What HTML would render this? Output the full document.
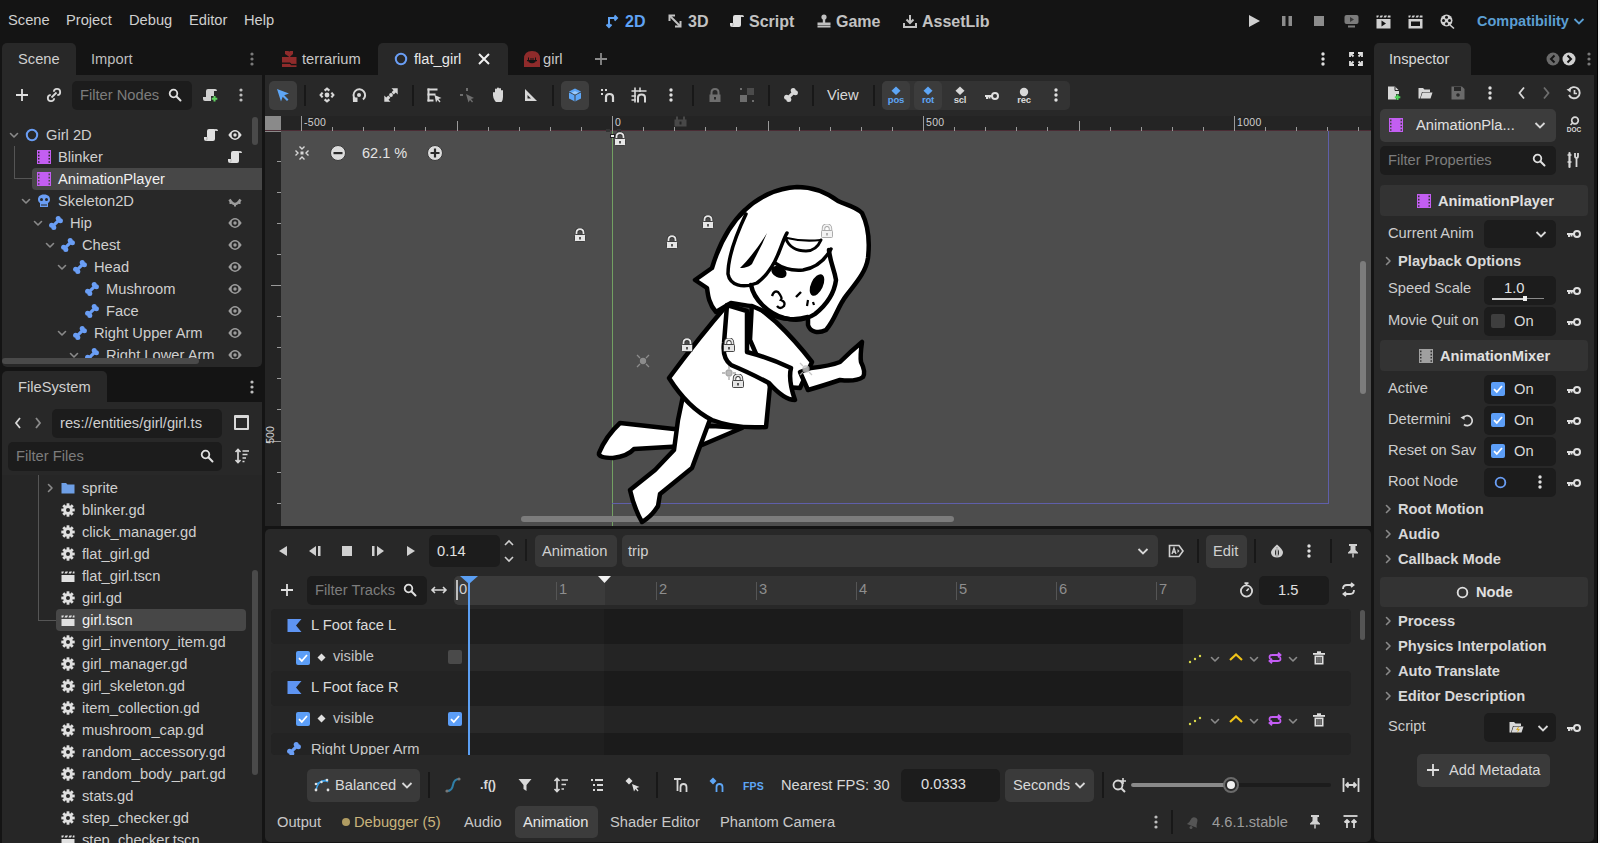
<!DOCTYPE html>
<html><head><meta charset="utf-8">
<style>
*{margin:0;padding:0;box-sizing:border-box}
html,body{width:1600px;height:843px;overflow:hidden;background:#141414}
body{position:relative;font-family:"Liberation Sans",sans-serif;font-size:14.7px;color:#cfcfcf}
.a{position:absolute}
.t{position:absolute;white-space:nowrap;line-height:20px;height:20px}
.pn{position:absolute;background:#282828}
.in{position:absolute;background:#1c1c1c;border-radius:5px}
.bt{position:absolute;background:#3c3c3c;border-radius:5px}
.dim{color:#7c7c7c}
.b{font-weight:bold}
svg{position:absolute;overflow:visible}
.sep{position:absolute;width:2px;height:24px;background:#181818}
</style></head><body>

<!-- ===== MENU BAR ===== -->
<div class="t" style="left:8px;top:10px">Scene</div>
<div class="t" style="left:66px;top:10px">Project</div>
<div class="t" style="left:129px;top:10px">Debug</div>
<div class="t" style="left:189px;top:10px">Editor</div>
<div class="t" style="left:244px;top:10px">Help</div>

<!-- ===== LEFT DOCK: SCENE ===== -->
<div class="pn" style="left:2px;top:43px;width:74px;height:40px;border-radius:5px 5px 0 0"></div>
<div class="pn" style="left:2px;top:75px;width:260px;height:292px;border-radius:0 0 5px 5px"></div>
<div class="t" style="left:18px;top:49px">Scene</div>
<div class="t" style="left:91px;top:49px;color:#bdbdbd">Import</div>
<svg class="a" style="left:245px;top:52px" width="14" height="14" viewBox="0 0 14 14"><g fill="#7a7a7a"><circle cx="7" cy="2" r="1.6"/><circle cx="7" cy="7" r="1.6"/><circle cx="7" cy="12" r="1.6"/></g></svg>
<!-- defs -->
<svg width="0" height="0" style="position:absolute">
<defs>
<symbol id="chev" viewBox="0 0 10 10"><path d="M1.5 3.5 L5 7 L8.5 3.5" fill="none" stroke="#8a8a8a" stroke-width="1.6" stroke-linecap="round" stroke-linejoin="round"/></symbol>
<symbol id="chevr" viewBox="0 0 10 10"><path d="M3.5 1.5 L7 5 L3.5 8.5" fill="none" stroke="#8a8a8a" stroke-width="1.6" stroke-linecap="round" stroke-linejoin="round"/></symbol>
<symbol id="eye" viewBox="0 0 14 14"><path d="M0.3 7 Q7 -2.8 13.7 7 Q7 16.8 0.3 7Z" fill="#e0e0e0"/><circle cx="7" cy="7" r="3.4" fill="#282828"/><circle cx="7" cy="7" r="1.7" fill="#e0e0e0"/></symbol><symbol id="eyeg" viewBox="0 0 14 14"><path d="M0.3 7 Q7 -2.8 13.7 7 Q7 16.8 0.3 7Z" fill="#9c9c9c"/><circle cx="7" cy="7" r="3.4" fill="#282828"/><circle cx="7" cy="7" r="1.7" fill="#9c9c9c"/></symbol>
<symbol id="eyec" viewBox="0 0 14 14"><path d="M1.5 1.5 Q7 10.5 12.5 1.5" fill="none" stroke="#9c9c9c" stroke-width="2.6"/><path d="M2.5 3.5 L2.5 6 M11.5 3.5 L11.5 6 M7 6 L7 8.5" stroke="#9c9c9c" stroke-width="2"/></symbol>
<symbol id="script" viewBox="0 0 14 14"><path d="M5 1 H12 Q14 1 14 3 H11 V11 Q11 13 9 13 H2 Q0 13 0 11 V9 H3 V3 Q3 1 5 1Z" fill="#e0e0e0"/><path d="M3 9 V11 Q3 12.5 1.5 12.5" fill="none" stroke="#a8a8a8" stroke-width="0.8"/><path d="M10.5 1.5 Q12 1.5 12 3" fill="none" stroke="#a8a8a8" stroke-width="0.8"/></symbol>
<symbol id="film" viewBox="0 0 14 14"><path fill-rule="evenodd" fill="#c35ef2" d="M0 0 H14 V14 H0Z M1 1.6 h1.5 v1.6 h-1.5Z M1 4.8 h1.5 v1.6 h-1.5Z M1 8 h1.5 v1.6 h-1.5Z M1 11.2 h1.5 v1.6 h-1.5Z M11.5 1.6 h1.5 v1.6 h-1.5Z M11.5 4.8 h1.5 v1.6 h-1.5Z M11.5 8 h1.5 v1.6 h-1.5Z M11.5 11.2 h1.5 v1.6 h-1.5Z"/></symbol>
<symbol id="filmg" viewBox="0 0 14 14"><path fill-rule="evenodd" fill="#a0a0a0" d="M0 0 H14 V14 H0Z M1 1.6 h1.5 v1.6 h-1.5Z M1 4.8 h1.5 v1.6 h-1.5Z M1 8 h1.5 v1.6 h-1.5Z M1 11.2 h1.5 v1.6 h-1.5Z M11.5 1.6 h1.5 v1.6 h-1.5Z M11.5 4.8 h1.5 v1.6 h-1.5Z M11.5 8 h1.5 v1.6 h-1.5Z M11.5 11.2 h1.5 v1.6 h-1.5Z"/></symbol>
<symbol id="bone" viewBox="0 0 14 14"><g fill="#6a9ef5"><path d="M3 8.8 L8.8 3 L11 5.2 L5.2 11Z"/><circle cx="9.2" cy="2.6" r="2.5"/><circle cx="11.4" cy="4.8" r="2.5"/><circle cx="2.6" cy="9.2" r="2.5"/><circle cx="4.8" cy="11.4" r="2.5"/></g></symbol>
<symbol id="ring" viewBox="0 0 14 14"><circle cx="7" cy="7" r="5.2" fill="none" stroke="#6a9ef5" stroke-width="2"/></symbol>
<symbol id="skull" viewBox="0 0 14 14"><path d="M7 0.5 C2.5 0.5 1 3 1 5.5 C1 7.5 2 8.5 3 9 V13 H11 V9 C12 8.5 13 7.5 13 5.5 C13 3 11.5 0.5 7 0.5Z" fill="#6a9ef5"/><circle cx="4.5" cy="5.5" r="1.5" fill="#282828"/><circle cx="9.5" cy="5.5" r="1.5" fill="#282828"/><path d="M5 10 v2 M7 10 v2 M9 10 v2" stroke="#282828" stroke-width="1"/></symbol>
<symbol id="gear" viewBox="0 0 14 14"><g fill="#e0e0e0"><circle cx="7" cy="7" r="4.8"/><rect x="5.6" y="0.3" width="2.8" height="13.4"/><rect x="0.3" y="5.6" width="13.4" height="2.8"/><rect x="5.6" y="0.3" width="2.8" height="13.4" transform="rotate(45 7 7)"/><rect x="5.6" y="0.3" width="2.8" height="13.4" transform="rotate(-45 7 7)"/></g><circle cx="7" cy="7" r="2" fill="#282828"/></symbol>
<symbol id="clap" viewBox="0 0 14 14"><g fill="#e0e0e0"><rect x="0.5" y="6" width="13" height="7"/><path d="M0.5 2.5 L3 2.5 L2 4.5 H0.5Z M4.5 2.5 H7 L6 4.5 H3.5Z M8.5 2.5 H11 L10 4.5 H7.5Z M12 2.5 H13.5 V4.5 H11.5Z"/></g></symbol>
<symbol id="folder" viewBox="0 0 14 14"><path d="M0.5 2 H5 L6.5 3.5 H13.5 V12.5 H0.5Z" fill="#6e9fe6"/></symbol>
<symbol id="kebab" viewBox="0 0 14 14"><g fill="#bdbdbd"><circle cx="7" cy="2" r="1.6"/><circle cx="7" cy="7" r="1.6"/><circle cx="7" cy="12" r="1.6"/></g></symbol>
<symbol id="kebabw" viewBox="0 0 14 14"><g fill="#e0e0e0"><circle cx="7" cy="2" r="1.7"/><circle cx="7" cy="7" r="1.7"/><circle cx="7" cy="12" r="1.7"/></g></symbol>
<symbol id="search" viewBox="0 0 14 14"><circle cx="5.5" cy="5.5" r="3.8" fill="none" stroke="#e0e0e0" stroke-width="1.8"/><path d="M8.3 8.3 L12.5 12.5" stroke="#e0e0e0" stroke-width="2" stroke-linecap="round"/></symbol>
<symbol id="plus" viewBox="0 0 14 14"><path d="M7 1 V13 M1 7 H13" stroke="#e0e0e0" stroke-width="1.8"/></symbol>
<symbol id="lock" viewBox="0 0 14 14"><path d="M3.5 7 V4.8 Q3.5 1.2 7 1.2 Q10.5 1.2 10.5 4.8 V7" fill="none" stroke="#333" stroke-width="3.4"/><path d="M3.5 7 V4.8 Q3.5 1.2 7 1.2 Q10.5 1.2 10.5 4.8 V7" fill="none" stroke="#e6e6e6" stroke-width="1.8"/><rect x="1.5" y="6.5" width="11" height="7" rx="1" fill="#e6e6e6" stroke="#333" stroke-width="0.9"/><rect x="6.2" y="9" width="1.6" height="2.5" fill="#333"/></symbol>
<symbol id="key" viewBox="0 0 16 10"><circle cx="11" cy="5" r="3" fill="none" stroke="#e0e0e0" stroke-width="2"/><path d="M1 5 H8 M3 5 V8 M5.5 5 V7.5" stroke="#e0e0e0" stroke-width="2"/></symbol>
<symbol id="chk" viewBox="0 0 14 14"><rect x="0" y="0" width="14" height="14" rx="2" fill="#5c9ef7"/><path d="M3 7.2 L5.8 10 L11 4" fill="none" stroke="#fff" stroke-width="1.8"/></symbol>
<symbol id="boneg" viewBox="0 0 14 14"><g fill="#d8d8d8"><path d="M3 8.8 L8.8 3 L11 5.2 L5.2 11Z"/><circle cx="9.2" cy="2.6" r="2.5"/><circle cx="11.4" cy="4.8" r="2.5"/><circle cx="2.6" cy="9.2" r="2.5"/><circle cx="4.8" cy="11.4" r="2.5"/></g></symbol>
<symbol id="chevw" viewBox="0 0 12 12"><path d="M1.5 4 L6 8.5 L10.5 4" fill="none" stroke="#d8d8d8" stroke-width="1.8"/></symbol>
</defs></svg>

<!-- Scene toolbar -->
<svg class="a" style="left:15px;top:88px" width="14" height="14"><use href="#plus"/></svg>
<svg class="a" style="left:47px;top:88px" width="14" height="14" viewBox="0 0 14 14"><g fill="none" stroke="#d8d8d8" stroke-width="1.8"><path d="M7.19 10.28 A3.2 3.2 0 1 1 3.72 6.81"/><path d="M6.81 3.72 A3.2 3.2 0 1 1 10.28 7.19"/><path d="M4.5 9.5 L9.5 4.5"/></g></svg>
<div class="in" style="left:72px;top:81px;width:120px;height:29px"></div>
<div class="t dim" style="left:80px;top:85px">Filter Nodes</div>
<svg class="a" style="left:168px;top:88px" width="14" height="14"><use href="#search"/></svg>
<svg class="a" style="left:203px;top:88px" width="14" height="14" viewBox="0 0 14 14"><path d="M5 1 H12 Q14 1 14 3 H11 V8 H8 V13 H2 Q0 13 0 11 V9 H3 V3 Q3 1 5 1Z" fill="#d0d0d0"/><path d="M11.5 8 V13.5 M8.7 10.8 H14.3" stroke="#5fd35f" stroke-width="2"/></svg>
<svg class="a" style="left:234px;top:88px" width="14" height="14"><use href="#kebab"/></svg>

<!-- Scene tree -->
<div class="a" style="left:32px;top:168px;width:230px;height:22px;background:#474747;border-radius:4px 0 0 4px"></div>
<div class="a" style="left:14px;top:146px;width:1px;height:33px;background:#555"></div>
<div class="a" style="left:14px;top:178px;width:18px;height:1px;background:#555"></div>
<div class="a" style="left:252px;top:117px;width:6px;height:28px;background:#4a4a4a;border-radius:3px"></div>

<svg class="a" style="left:9px;top:130px" width="10" height="10"><use href="#chev"/></svg>
<svg class="a" style="left:25px;top:128px" width="14" height="14"><use href="#ring"/></svg>
<div class="t" style="left:46px;top:125px">Girl 2D</div>
<svg class="a" style="left:204px;top:128px" width="14" height="14"><use href="#script"/></svg>
<svg class="a" style="left:228px;top:128px" width="14" height="14"><use href="#eye"/></svg>

<svg class="a" style="left:37px;top:150px" width="14" height="14"><use href="#film"/></svg>
<div class="t" style="left:58px;top:147px">Blinker</div>
<svg class="a" style="left:228px;top:150px" width="14" height="14"><use href="#script"/></svg>

<svg class="a" style="left:37px;top:172px" width="14" height="14"><use href="#film"/></svg>
<div class="t" style="left:58px;top:169px;color:#f0f0f0">AnimationPlayer</div>

<svg class="a" style="left:21px;top:196px" width="10" height="10"><use href="#chev"/></svg>
<svg class="a" style="left:37px;top:194px" width="14" height="14"><use href="#skull"/></svg>
<div class="t" style="left:58px;top:191px">Skeleton2D</div>
<svg class="a" style="left:228px;top:198px" width="14" height="14"><use href="#eyec"/></svg>

<svg class="a" style="left:33px;top:218px" width="10" height="10"><use href="#chev"/></svg>
<svg class="a" style="left:49px;top:216px" width="14" height="14"><use href="#bone"/></svg>
<div class="t" style="left:70px;top:213px">Hip</div>
<svg class="a" style="left:228px;top:216px" width="14" height="14"><use href="#eyeg"/></svg>

<svg class="a" style="left:45px;top:240px" width="10" height="10"><use href="#chev"/></svg>
<svg class="a" style="left:61px;top:238px" width="14" height="14"><use href="#bone"/></svg>
<div class="t" style="left:82px;top:235px">Chest</div>
<svg class="a" style="left:228px;top:238px" width="14" height="14"><use href="#eyeg"/></svg>

<svg class="a" style="left:57px;top:262px" width="10" height="10"><use href="#chev"/></svg>
<svg class="a" style="left:73px;top:260px" width="14" height="14"><use href="#bone"/></svg>
<div class="t" style="left:94px;top:257px">Head</div>
<svg class="a" style="left:228px;top:260px" width="14" height="14"><use href="#eyeg"/></svg>

<svg class="a" style="left:85px;top:282px" width="14" height="14"><use href="#bone"/></svg>
<div class="t" style="left:106px;top:279px">Mushroom</div>
<svg class="a" style="left:228px;top:282px" width="14" height="14"><use href="#eyeg"/></svg>

<svg class="a" style="left:85px;top:304px" width="14" height="14"><use href="#bone"/></svg>
<div class="t" style="left:106px;top:301px">Face</div>
<svg class="a" style="left:228px;top:304px" width="14" height="14"><use href="#eyeg"/></svg>

<svg class="a" style="left:57px;top:328px" width="10" height="10"><use href="#chev"/></svg>
<svg class="a" style="left:73px;top:326px" width="14" height="14"><use href="#bone"/></svg>
<div class="t" style="left:94px;top:323px">Right Upper Arm</div>
<svg class="a" style="left:228px;top:326px" width="14" height="14"><use href="#eyeg"/></svg>

<div class="a" style="left:2px;top:345px;width:260px;height:14px;overflow:hidden">
<svg class="a" style="left:67px;top:5px" width="10" height="10"><use href="#chev"/></svg>
<svg class="a" style="left:83px;top:3px" width="14" height="14"><use href="#bone"/></svg>
<div class="t" style="left:104px;top:0px">Right Lower Arm</div>
<svg class="a" style="left:226px;top:3px" width="14" height="14"><use href="#eyeg"/></svg>
</div>
<div class="a" style="left:2px;top:358px;width:197px;height:6px;background:#4a4a4a;border-radius:3px"></div>

<!-- ===== FILESYSTEM DOCK ===== -->
<div class="pn" style="left:2px;top:371px;width:105px;height:40px;border-radius:5px 5px 0 0"></div>
<div class="pn" style="left:2px;top:402px;width:260px;height:441px"></div>
<div class="t" style="left:18px;top:377px">FileSystem</div>
<svg class="a" style="left:245px;top:380px" width="14" height="14"><use href="#kebab"/></svg>
<svg class="a" style="left:12px;top:416px" width="12" height="14" viewBox="0 0 12 14"><path d="M8 2 L4 7 L8 12" fill="none" stroke="#d8d8d8" stroke-width="1.8"/></svg>
<svg class="a" style="left:32px;top:416px" width="12" height="14" viewBox="0 0 12 14"><path d="M4 2 L8 7 L4 12" fill="none" stroke="#8a8a8a" stroke-width="1.8"/></svg>
<div class="in" style="left:52px;top:409px;width:170px;height:29px"></div>
<div class="t" style="left:60px;top:413px">res://entities/girl/girl.ts</div>
<div class="a" style="left:234px;top:415px;width:15px;height:15px;border:2px solid #d8d8d8;border-top-width:3px;border-radius:1px"></div>
<div class="in" style="left:8px;top:442px;width:214px;height:29px"></div>
<div class="t dim" style="left:16px;top:446px">Filter Files</div>
<svg class="a" style="left:200px;top:449px" width="14" height="14"><use href="#search"/></svg>
<svg class="a" style="left:234px;top:448px" width="16" height="16" viewBox="0 0 16 16"><path d="M4 1.5 V14.5 M1.5 4 L4 1.5 L6.5 4 M1.5 12 L4 14.5 L6.5 12" fill="none" stroke="#d8d8d8" stroke-width="1.7"/><path d="M8.5 3 H15 M8.5 6.5 H13.5 M8.5 10 H12 M8.5 13.5 H10.5" stroke="#d8d8d8" stroke-width="1.7"/></svg>

<div class="a" style="left:2px;top:475px;width:260px;height:368px;background:#262626"></div>
<div class="a" style="left:38px;top:475px;width:1px;height:146px;background:#555"></div>
<div class="a" style="left:38px;top:620px;width:18px;height:1px;background:#555"></div>
<div class="a" style="left:56px;top:609px;width:190px;height:22px;background:#474747;border-radius:4px"></div>
<div class="a" style="left:252px;top:570px;width:6px;height:205px;background:#4a4a4a;border-radius:3px"></div>

<svg class="a" style="left:45px;top:483px" width="10" height="10"><use href="#chevr"/></svg>
<svg class="a" style="left:61px;top:481px" width="14" height="14"><use href="#folder"/></svg>
<div class="t" style="left:82px;top:478px">sprite</div>
<svg class="a" style="left:61px;top:503px" width="14" height="14"><use href="#gear"/></svg>
<div class="t" style="left:82px;top:500px;">blinker.gd</div>
<svg class="a" style="left:61px;top:525px" width="14" height="14"><use href="#gear"/></svg>
<div class="t" style="left:82px;top:522px;">click_manager.gd</div>
<svg class="a" style="left:61px;top:547px" width="14" height="14"><use href="#gear"/></svg>
<div class="t" style="left:82px;top:544px;">flat_girl.gd</div>
<svg class="a" style="left:61px;top:569px" width="14" height="14"><use href="#clap"/></svg>
<div class="t" style="left:82px;top:566px;">flat_girl.tscn</div>
<svg class="a" style="left:61px;top:591px" width="14" height="14"><use href="#gear"/></svg>
<div class="t" style="left:82px;top:588px;">girl.gd</div>
<svg class="a" style="left:61px;top:613px" width="14" height="14"><use href="#clap"/></svg>
<div class="t" style="left:82px;top:610px;color:#f0f0f0;">girl.tscn</div>
<svg class="a" style="left:61px;top:635px" width="14" height="14"><use href="#gear"/></svg>
<div class="t" style="left:82px;top:632px;">girl_inventory_item.gd</div>
<svg class="a" style="left:61px;top:657px" width="14" height="14"><use href="#gear"/></svg>
<div class="t" style="left:82px;top:654px;">girl_manager.gd</div>
<svg class="a" style="left:61px;top:679px" width="14" height="14"><use href="#gear"/></svg>
<div class="t" style="left:82px;top:676px;">girl_skeleton.gd</div>
<svg class="a" style="left:61px;top:701px" width="14" height="14"><use href="#gear"/></svg>
<div class="t" style="left:82px;top:698px;">item_collection.gd</div>
<svg class="a" style="left:61px;top:723px" width="14" height="14"><use href="#gear"/></svg>
<div class="t" style="left:82px;top:720px;">mushroom_cap.gd</div>
<svg class="a" style="left:61px;top:745px" width="14" height="14"><use href="#gear"/></svg>
<div class="t" style="left:82px;top:742px;">random_accessory.gd</div>
<svg class="a" style="left:61px;top:767px" width="14" height="14"><use href="#gear"/></svg>
<div class="t" style="left:82px;top:764px;">random_body_part.gd</div>
<svg class="a" style="left:61px;top:789px" width="14" height="14"><use href="#gear"/></svg>
<div class="t" style="left:82px;top:786px;">stats.gd</div>
<svg class="a" style="left:61px;top:811px" width="14" height="14"><use href="#gear"/></svg>
<div class="t" style="left:82px;top:808px;">step_checker.gd</div>
<svg class="a" style="left:61px;top:833px" width="14" height="14"><use href="#clap"/></svg>
<div class="t" style="left:82px;top:830px;">step_checker.tscn</div>
<!-- ===== TOP CENTER MENU ===== -->
<svg class="a" style="left:606px;top:14px" width="14" height="14" viewBox="0 0 14 14"><g fill="none" stroke="#5fa3f5" stroke-width="2"><path d="M3 13 V4 H11"/><path d="M0.5 10.5 L3 13 L5.5 10.5"/><path d="M8.5 1.5 L11 4 L8.5 6.5"/></g></svg>
<div class="t b" style="left:625px;top:12px;font-size:16px;color:#5fa3f5">2D</div>
<svg class="a" style="left:668px;top:14px" width="14" height="14" viewBox="0 0 14 14"><g fill="none" stroke="#c2c2c2" stroke-width="2"><path d="M1.5 7 V1.5 H7"/><path d="M12.5 7 V12.5 H7"/><path d="M2 2 L12 12"/></g></svg>
<div class="t b" style="left:688px;top:12px;font-size:16px;color:#c2c2c2">3D</div>
<svg class="a" style="left:730px;top:14px" width="14" height="14"><use href="#script"/></svg>
<div class="t b" style="left:749px;top:12px;font-size:16px;color:#c2c2c2">Script</div>
<svg class="a" style="left:817px;top:14px" width="14" height="14" viewBox="0 0 14 14"><g fill="#c2c2c2"><circle cx="7" cy="3" r="2.6"/><rect x="5.8" y="4" width="2.4" height="5"/><rect x="0.5" y="8.5" width="13" height="2.5"/><rect x="0.5" y="11.5" width="13" height="2"/></g></svg>
<div class="t b" style="left:836px;top:12px;font-size:16px;color:#c2c2c2">Game</div>
<svg class="a" style="left:903px;top:14px" width="14" height="14" viewBox="0 0 14 14"><g fill="none" stroke="#c2c2c2" stroke-width="2"><path d="M7 1 V9"/><path d="M3.5 5.5 L7 9 L10.5 5.5"/><path d="M1 9 V13 H13 V9"/></g></svg>
<div class="t b" style="left:922px;top:12px;font-size:16px;color:#c2c2c2">AssetLib</div>

<!-- ===== TOP RIGHT PLAY BUTTONS ===== -->
<svg class="a" style="left:1247px;top:14px" width="14" height="14" viewBox="0 0 14 14"><path d="M2 1 L13 7 L2 13Z" fill="#d0d0d0"/></svg>
<svg class="a" style="left:1280px;top:14px" width="14" height="14" viewBox="0 0 14 14"><rect x="2" y="2" width="3.5" height="10" fill="#8c8c8c"/><rect x="8.5" y="2" width="3.5" height="10" fill="#8c8c8c"/></svg>
<svg class="a" style="left:1312px;top:14px" width="14" height="14" viewBox="0 0 14 14"><rect x="2" y="2" width="10" height="10" fill="#8c8c8c"/></svg>
<svg class="a" style="left:1344px;top:14px" width="15" height="14" viewBox="0 0 15 14"><rect x="0.5" y="1" width="14" height="9" rx="2" fill="#7c7c7c"/><path d="M6 3 L10 5.5 L6 8Z" fill="#3a3a3a"/><rect x="4" y="11.5" width="7" height="2" fill="#7c7c7c"/></svg>
<svg class="a" style="left:1376px;top:14px" width="15" height="15" viewBox="0 0 15 15"><g fill="#d0d0d0"><rect x="0.5" y="5" width="14" height="9.5"/><path d="M0.5 1.5 H3 L2 3.5 H0.5Z M4.5 1.5 H7 L6 3.5 H3.5Z M8.5 1.5 H11 L10 3.5 H7.5Z M12 1.5 H14.5 V3.5 H11.5Z"/></g><path d="M5.5 6.5 L10 9.5 L5.5 12.5Z" fill="#141414"/></svg>
<svg class="a" style="left:1408px;top:14px" width="15" height="15" viewBox="0 0 15 15"><g fill="#d0d0d0"><rect x="0.5" y="5" width="14" height="9.5"/><path d="M0.5 1.5 H3 L2 3.5 H0.5Z M4.5 1.5 H7 L6 3.5 H3.5Z M8.5 1.5 H11 L10 3.5 H7.5Z M12 1.5 H14.5 V3.5 H11.5Z"/></g><rect x="3" y="7.5" width="9" height="4.5" fill="#141414"/></svg>
<svg class="a" style="left:1440px;top:14px" width="15" height="15" viewBox="0 0 15 15"><circle cx="6.5" cy="6.5" r="6" fill="#d0d0d0"/><g fill="#141414"><circle cx="6.5" cy="3.3" r="1.5"/><circle cx="3.5" cy="6.5" r="1.5"/><circle cx="9.5" cy="6.5" r="1.5"/><circle cx="6.5" cy="9.7" r="1.5"/></g><path d="M10 11 L14 14.5" stroke="#d0d0d0" stroke-width="1.6"/></svg>
<div class="t b" style="left:1477px;top:11px;font-size:14.5px;color:#5b9ed2">Compatibility</div>
<svg class="a" style="left:1573px;top:15px" width="12" height="12" viewBox="0 0 12 12"><path d="M1.5 4 L6 8.5 L10.5 4" fill="none" stroke="#5b9ed2" stroke-width="1.8"/></svg>

<!-- ===== SCENE TABS ===== -->
<svg class="a" style="left:282px;top:51px" width="15" height="16" viewBox="0 0 15 16"><g fill="#8f2b2b"><path d="M3 0 H6.5 L7.2 0.8 L8 0 H11 V3 L8.2 5.5 V6 H6.8 V5.5 L3 3Z"/><path d="M0 6 H14.5 V13.5 H9.5 L8.5 12 H0Z"/><path d="M0 12.8 H8 L9 14.3 H14.5 V16 H0Z" /></g><path d="M0 12 H8.2 L9.2 13.4 H14.5" fill="none" stroke="#141414" stroke-width="1"/></svg>
<div class="t" style="left:302px;top:49px;color:#c8c8c8">terrarium</div>
<div class="pn" style="left:378px;top:43px;width:130px;height:40px;border-radius:5px 5px 0 0"></div>
<svg class="a" style="left:394px;top:52px" width="14" height="14"><use href="#ring"/></svg>
<div class="t" style="left:414px;top:49px;color:#e8e8e8">flat_girl</div>
<svg class="a" style="left:477px;top:52px" width="14" height="14" viewBox="0 0 14 14"><path d="M2 2 L12 12 M12 2 L2 12" stroke="#f0f0f0" stroke-width="2"/></svg>
<svg class="a" style="left:524px;top:51px" width="16" height="16" viewBox="0 0 16 16"><path d="M0 16 V8 Q0 0 8 0 Q16 0 16 8 V16Z" fill="#8f2b2b"/><g fill="#141414"><rect x="4" y="6.5" width="1" height="3"/><rect x="11" y="6.5" width="1" height="3"/><rect x="3" y="9" width="10" height="1.2"/><rect x="6" y="7.5" width="4" height="1"/><path d="M4.5 10 H11.5 V11 Q8 13.5 4.5 11Z"/></g></svg>
<div class="t" style="left:543px;top:49px;color:#c8c8c8">girl</div>
<svg class="a" style="left:594px;top:52px" width="14" height="14" viewBox="0 0 14 14"><path d="M7 1 V13 M1 7 H13" stroke="#8a8a8a" stroke-width="1.8"/></svg>
<svg class="a" style="left:1316px;top:52px" width="14" height="14"><use href="#kebabw"/></svg>
<svg class="a" style="left:1349px;top:52px" width="14" height="14" viewBox="0 0 14 14"><g fill="none" stroke="#e0e0e0" stroke-width="1.8"><path d="M1 5 V1 H5 M9 1 H13 V5 M13 9 V13 H9 M5 13 H1 V9"/><path d="M1.5 1.5 L4.5 4.5 M12.5 1.5 L9.5 4.5 M12.5 12.5 L9.5 9.5 M1.5 12.5 L4.5 9.5"/></g></svg>

<!-- ===== CANVAS PANEL ===== -->
<div class="pn" style="left:265px;top:75px;width:1106px;height:451px"></div>
<!-- toolbar -->
<div class="bt" style="left:269px;top:81px;width:28px;height:29px;background:#3e3e3e"></div>
<svg class="a" style="left:276px;top:88px" width="14" height="14" viewBox="0 0 14 14"><path d="M1 1 L13 5.5 L8.2 7.2 L12.5 11.5 L11 13 L6.7 8.7 L5 13.5Z" fill="#5ea6f6"/></svg>
<div class="sep" style="left:304px;top:85px;height:21px"></div>
<svg class="a" style="left:320px;top:88px" width="14" height="14" viewBox="0 0 14 14"><circle cx="7" cy="7" r="2.4" fill="#d8d8d8"/><g fill="none" stroke="#d8d8d8" stroke-width="2.1" stroke-linejoin="miter"><path d="M4.6 2.6 L7 0.6 L9.4 2.6"/><path d="M4.6 11.4 L7 13.4 L9.4 11.4"/><path d="M2.6 4.6 L0.6 7 L2.6 9.4"/><path d="M11.4 4.6 L13.4 7 L11.4 9.4"/></g></svg>
<svg class="a" style="left:352px;top:88px" width="14" height="14" viewBox="0 0 14 14"><path d="M3.2 11.2 A5.8 5.8 0 1 1 11 11.6" fill="none" stroke="#d8d8d8" stroke-width="2"/><circle cx="7" cy="7" r="2" fill="#d8d8d8"/><path d="M0.8 9.5 L5.5 9.5 L5.5 14 L1 14Z" fill="#d8d8d8"/></svg>
<svg class="a" style="left:384px;top:88px" width="14" height="14" viewBox="0 0 14 14"><circle cx="7" cy="7" r="1.9" fill="#d8d8d8"/><path d="M7.5 0.3 H13.7 V6.5 L11.7 4.5 L9.8 6.4 L7.6 4.2 L9.5 2.3Z" fill="#d8d8d8"/><path d="M6.5 13.7 H0.3 V7.5 L2.3 9.5 L4.2 7.6 L6.4 9.8 L4.5 11.7Z" fill="#d8d8d8"/></svg>
<div class="sep" style="left:412px;top:85px;height:21px"></div>
<svg class="a" style="left:427px;top:88px" width="15" height="15" viewBox="0 0 15 15"><g fill="#d8d8d8"><rect x="0.5" y="0.5" width="10" height="2"/><rect x="0.5" y="0.5" width="2" height="13"/><rect x="0.5" y="5.5" width="8" height="2"/><rect x="0.5" y="11.5" width="6" height="2"/><path d="M7.5 7 L14.5 10 L11.5 11 L13.5 13.5 L12.5 14.5 L10.5 12 L9 14.5Z"/></g></svg>
<svg class="a" style="left:460px;top:88px" width="15" height="15" viewBox="0 0 15 15"><g fill="#6e6e6e"><rect x="6" y="0" width="2" height="3"/><rect x="0" y="6" width="3" height="2"/><path d="M6 6 L14 10 L11 11 L13 13.5 L12 14.5 L10 12 L8.5 14.5Z"/></g></svg>
<svg class="a" style="left:492px;top:87px" width="14" height="16" viewBox="0 0 14 16"><path d="M3 14 Q1 11 1 8.5 V6 Q1 5 2 5 Q3 5 3 6 V8 V2.5 Q3 1.5 4 1.5 Q5 1.5 5 2.5 V7 V1.5 Q5 0.5 6 0.5 Q7 0.5 7 1.5 V7 V2 Q7 1 8 1 Q9 1 9 2 V7 V4 Q9 3 10 3 Q11 3 11 4 V10 Q11 13 9.5 15 H4Z" fill="#d8d8d8"/></svg>
<svg class="a" style="left:524px;top:88px" width="14" height="14" viewBox="0 0 14 14"><path d="M1 1 V13 H13Z" fill="#d8d8d8"/><path d="M3.5 7 V10.5 H7Z" fill="#282828"/></svg>
<div class="sep" style="left:552px;top:85px;height:21px"></div>
<div class="bt" style="left:561px;top:81px;width:28px;height:29px;background:#3e3e3e"></div>
<svg class="a" style="left:568px;top:88px" width="14" height="14" viewBox="0 0 14 14"><path d="M7 0.5 L13 3.5 V10.5 L7 13.5 L1 10.5 V3.5Z" fill="#5ea6f6"/><path d="M7 7 L13 4 M7 7 L1 4 M7 7 V13.5" stroke="#3e3e3e" stroke-width="1"/><path d="M7 3 L10.5 4.8 L7 6.5 L3.5 4.8Z" fill="#9ccaf9"/></svg>
<svg class="a" style="left:600px;top:88px" width="15" height="15" viewBox="0 0 15 15"><g fill="#d8d8d8"><rect x="1" y="1" width="2" height="2"/><rect x="1" y="5" width="2" height="2"/><rect x="5" y="1" width="2" height="2"/></g><path d="M6 14 V9 Q6 6 9.5 6 Q13 6 13 9 V14" fill="none" stroke="#d8d8d8" stroke-width="2.2"/></svg>
<svg class="a" style="left:631px;top:87px" width="16" height="16" viewBox="0 0 16 16"><g stroke="#d8d8d8" stroke-width="1.6" fill="none"><path d="M4 0.5 V15.5 M9 0.5 V5 M0.5 4 H15.5 M0.5 9 H5 M0.5 13 H5"/><path d="M7 15.5 V10.5 Q7 7.5 10.5 7.5 Q14 7.5 14 10.5 V15.5" stroke-width="2"/></g></svg>
<svg class="a" style="left:664px;top:88px" width="14" height="14"><use href="#kebabw"/></svg>
<div class="sep" style="left:692px;top:85px;height:21px"></div>
<svg class="a" style="left:708px;top:88px" width="14" height="14" viewBox="0 0 14 14"><path d="M3.5 7 V4.5 Q3.5 1 7 1 Q10.5 1 10.5 4.5 V7" fill="none" stroke="#6e6e6e" stroke-width="2"/><rect x="1.5" y="6.5" width="11" height="7.5" fill="#6e6e6e"/><rect x="6" y="9" width="2" height="2.5" fill="#282828"/></svg>
<svg class="a" style="left:740px;top:88px" width="14" height="14" viewBox="0 0 14 14"><g fill="#6e6e6e"><rect x="0" y="7" width="7" height="7"/><rect x="7" y="0" width="7" height="7" opacity="0.5"/><rect x="0" y="0" width="2" height="2"/><rect x="12" y="12" width="2" height="2"/></g></svg>
<div class="sep" style="left:768px;top:85px;height:21px"></div>
<svg class="a" style="left:784px;top:88px" width="14" height="14"><use href="#boneg"/></svg>
<div class="sep" style="left:812px;top:85px;height:21px"></div>
<div class="t" style="left:827px;top:85px;color:#d8d8d8">View</div>
<div class="sep" style="left:873px;top:85px;height:21px"></div>
<div class="a" style="left:882px;top:81px;width:188px;height:29px;background:#333;border-radius:5px"></div>
<div class="a" style="left:882px;top:81px;width:28px;height:29px;background:#3c3c3c;border-radius:5px"></div>
<div class="a" style="left:914px;top:81px;width:28px;height:29px;background:#3c3c3c;border-radius:5px"></div>
<svg class="a" style="left:886px;top:87px" width="20" height="18" viewBox="0 0 20 18"><path d="M10 -0.5 L14.5 3.8 L10 8 L5.5 3.8Z" fill="#5ea6f6"/><text x="10" y="16" text-anchor="middle" font-family="Liberation Sans" font-weight="bold" font-size="9.5" letter-spacing="-0.2" fill="#5ea6f6">pos</text></svg>
<svg class="a" style="left:918px;top:87px" width="20" height="18" viewBox="0 0 20 18"><path d="M10 -0.5 L14.5 3.8 L10 8 L5.5 3.8Z" fill="#5ea6f6"/><text x="10" y="16" text-anchor="middle" font-family="Liberation Sans" font-weight="bold" font-size="9.5" letter-spacing="-0.2" fill="#5ea6f6">rot</text></svg>
<svg class="a" style="left:950px;top:87px" width="20" height="18" viewBox="0 0 20 18"><path d="M10 -0.5 L14.5 3.8 L10 8 L5.5 3.8Z" fill="#d8d8d8"/><text x="10" y="16" text-anchor="middle" font-family="Liberation Sans" font-weight="bold" font-size="9.5" letter-spacing="-0.2" fill="#d8d8d8">scl</text></svg>
<svg class="a" style="left:984px;top:91px" width="16" height="10"><use href="#key"/></svg>
<svg class="a" style="left:1014px;top:87px" width="20" height="18" viewBox="0 0 20 18"><circle cx="10" cy="5" r="4.2" fill="#d8d8d8"/><text x="10" y="16" text-anchor="middle" font-family="Liberation Sans" font-weight="bold" font-size="9.5" letter-spacing="-0.2" fill="#d8d8d8">rec</text></svg>
<svg class="a" style="left:1049px;top:88px" width="14" height="14"><use href="#kebabw"/></svg>
<!-- rulers & viewport -->
<div class="a" style="left:265px;top:116px;width:1106px;height:16px;background:#242424"></div>
<div class="a" style="left:265px;top:131px;width:16px;height:395px;background:#242424"></div>
<div class="a" style="left:265px;top:116px;width:16px;height:16px;background:#8a8a8a"></div>
<div class="a" style="left:281px;top:131px;width:1090px;height:395px;background:#4d4d4d"></div>
<div class="a" style="left:265px;top:130px;width:1106px;height:1px;background:#4b2c35"></div>
<div class="a" style="left:301.0px;top:116px;width:1px;height:15px;background:#9a9a9a"></div>
<div class="a" style="left:332.1px;top:127px;width:1px;height:4px;background:#9a9a9a"></div>
<div class="a" style="left:363.2px;top:127px;width:1px;height:4px;background:#9a9a9a"></div>
<div class="a" style="left:394.3px;top:127px;width:1px;height:4px;background:#9a9a9a"></div>
<div class="a" style="left:425.4px;top:127px;width:1px;height:4px;background:#9a9a9a"></div>
<div class="a" style="left:456.5px;top:121px;width:1px;height:10px;background:#9a9a9a"></div>
<div class="a" style="left:487.6px;top:127px;width:1px;height:4px;background:#9a9a9a"></div>
<div class="a" style="left:518.7px;top:127px;width:1px;height:4px;background:#9a9a9a"></div>
<div class="a" style="left:549.8px;top:127px;width:1px;height:4px;background:#9a9a9a"></div>
<div class="a" style="left:580.9px;top:127px;width:1px;height:4px;background:#9a9a9a"></div>
<div class="a" style="left:612.0px;top:116px;width:1px;height:15px;background:#9a9a9a"></div>
<div class="a" style="left:643.1px;top:127px;width:1px;height:4px;background:#9a9a9a"></div>
<div class="a" style="left:674.2px;top:127px;width:1px;height:4px;background:#9a9a9a"></div>
<div class="a" style="left:705.3px;top:127px;width:1px;height:4px;background:#9a9a9a"></div>
<div class="a" style="left:736.4px;top:127px;width:1px;height:4px;background:#9a9a9a"></div>
<div class="a" style="left:767.5px;top:121px;width:1px;height:10px;background:#9a9a9a"></div>
<div class="a" style="left:798.6px;top:127px;width:1px;height:4px;background:#9a9a9a"></div>
<div class="a" style="left:829.7px;top:127px;width:1px;height:4px;background:#9a9a9a"></div>
<div class="a" style="left:860.8px;top:127px;width:1px;height:4px;background:#9a9a9a"></div>
<div class="a" style="left:891.9px;top:127px;width:1px;height:4px;background:#9a9a9a"></div>
<div class="a" style="left:923.0px;top:116px;width:1px;height:15px;background:#9a9a9a"></div>
<div class="a" style="left:954.1px;top:127px;width:1px;height:4px;background:#9a9a9a"></div>
<div class="a" style="left:985.2px;top:127px;width:1px;height:4px;background:#9a9a9a"></div>
<div class="a" style="left:1016.3px;top:127px;width:1px;height:4px;background:#9a9a9a"></div>
<div class="a" style="left:1047.4px;top:127px;width:1px;height:4px;background:#9a9a9a"></div>
<div class="a" style="left:1078.5px;top:121px;width:1px;height:10px;background:#9a9a9a"></div>
<div class="a" style="left:1109.6px;top:127px;width:1px;height:4px;background:#9a9a9a"></div>
<div class="a" style="left:1140.7px;top:127px;width:1px;height:4px;background:#9a9a9a"></div>
<div class="a" style="left:1171.8px;top:127px;width:1px;height:4px;background:#9a9a9a"></div>
<div class="a" style="left:1202.9px;top:127px;width:1px;height:4px;background:#9a9a9a"></div>
<div class="a" style="left:1234.0px;top:116px;width:1px;height:15px;background:#9a9a9a"></div>
<div class="a" style="left:1265.1px;top:127px;width:1px;height:4px;background:#9a9a9a"></div>
<div class="a" style="left:1296.2px;top:127px;width:1px;height:4px;background:#9a9a9a"></div>
<div class="a" style="left:1327.3px;top:127px;width:1px;height:4px;background:#9a9a9a"></div>
<div class="a" style="left:1358.4px;top:127px;width:1px;height:4px;background:#9a9a9a"></div>
<div class="t" style="left:304.0px;top:112px;font-size:10.5px;color:#cfcfcf;letter-spacing:0.3px">-500</div>
<div class="t" style="left:615.0px;top:112px;font-size:10.5px;color:#cfcfcf;letter-spacing:0.3px">0</div>
<div class="t" style="left:926.0px;top:112px;font-size:10.5px;color:#cfcfcf;letter-spacing:0.3px">500</div>
<div class="t" style="left:1237.0px;top:112px;font-size:10.5px;color:#cfcfcf;letter-spacing:0.3px">1000</div>
<div class="a" style="left:277px;top:160.6px;width:4px;height:1px;background:#9a9a9a"></div>
<div class="a" style="left:277px;top:191.7px;width:4px;height:1px;background:#9a9a9a"></div>
<div class="a" style="left:277px;top:222.8px;width:4px;height:1px;background:#9a9a9a"></div>
<div class="a" style="left:277px;top:253.9px;width:4px;height:1px;background:#9a9a9a"></div>
<div class="a" style="left:271px;top:285.0px;width:10px;height:1px;background:#9a9a9a"></div>
<div class="a" style="left:277px;top:316.1px;width:4px;height:1px;background:#9a9a9a"></div>
<div class="a" style="left:277px;top:347.2px;width:4px;height:1px;background:#9a9a9a"></div>
<div class="a" style="left:277px;top:378.3px;width:4px;height:1px;background:#9a9a9a"></div>
<div class="a" style="left:277px;top:409.4px;width:4px;height:1px;background:#9a9a9a"></div>
<div class="a" style="left:266px;top:440.5px;width:15px;height:1px;background:#9a9a9a"></div>
<div class="a" style="left:277px;top:471.6px;width:4px;height:1px;background:#9a9a9a"></div>
<div class="a" style="left:277px;top:502.7px;width:4px;height:1px;background:#9a9a9a"></div>
<div class="t" style="left:258px;top:425px;font-size:10.5px;color:#cfcfcf;transform:rotate(-90deg);width:24px;text-align:center">500</div>
<div class="a" style="left:612px;top:131px;width:1px;height:395px;background:#72a062"></div>
<div class="a" style="left:612px;top:503px;width:716px;height:1px;background:#5f5faa"></div>
<div class="a" style="left:1328px;top:131px;width:1px;height:373px;background:#5f5faa"></div>
<div class="a" style="left:521px;top:516px;width:433px;height:6px;background:#7c7c7c;border-radius:3px"></div>
<div class="a" style="left:1360px;top:261px;width:6px;height:133px;background:#7c7c7c;border-radius:3px"></div>
<svg class="a" style="left:295px;top:146px" width="14" height="14" viewBox="0 0 14 14"><g fill="#d8d8d8"><rect x="5.5" y="5.5" width="3" height="3"/></g><g fill="none" stroke="#d8d8d8" stroke-width="1.4"><path d="M4.5 0.5 L7 3 L9.5 0.5 M4.5 13.5 L7 11 L9.5 13.5 M0.5 4.5 L3 7 L0.5 9.5 M13.5 4.5 L11 7 L13.5 9.5"/></g></svg>
<svg class="a" style="left:330px;top:145px" width="16" height="16" viewBox="0 0 16 16"><circle cx="8" cy="8" r="7.5" fill="#dcdcdc" stroke="#3a3a3a" stroke-width="1"/><rect x="3.5" y="7" width="9" height="2.2" fill="#2a2a2a"/></svg>
<div class="t" style="left:362px;top:143px;font-size:14.5px;color:#e4e4e4">62.1 %</div>
<svg class="a" style="left:427px;top:145px" width="16" height="16" viewBox="0 0 16 16"><circle cx="8" cy="8" r="7.5" fill="#dcdcdc" stroke="#3a3a3a" stroke-width="1"/><path d="M3.5 8 H12.5 M8 3.5 V12.5" stroke="#2a2a2a" stroke-width="2.2"/></svg>
<svg class="a" style="left:674px;top:116px" width="13" height="11" viewBox="0 0 13 11"><rect x="0.5" y="3.5" width="12" height="7" fill="#484848"/><rect x="2" y="0.5" width="2" height="3.5" fill="#484848"/><rect x="9" y="0.5" width="2" height="3.5" fill="#484848"/><rect x="5.5" y="5.5" width="2" height="3" fill="#242424"/></svg>
<div class="a" style="left:606px;top:129px;width:4px;height:3px;background:#333"></div>
<div class="a" style="left:617px;top:129px;width:4px;height:3px;background:#333"></div>
<div class="a" style="left:610px;top:134px;width:5px;height:4px;background:#eee;border:1px solid #222"></div>
<!-- ===== GIRL ===== -->
<svg class="a" style="left:281px;top:131px" width="1090" height="395" viewBox="281 131 1090 395">
<g stroke="#000" stroke-width="4.5" stroke-linejoin="round" stroke-linecap="round" fill="#fff">
<!-- back leg -->
<path d="M620 423 L674 429 L712 426 L742 428 L702 445 L634 449 Q628 456 613 458 Q598 458 599 453 Q606 436 620 423Z"/>
<!-- front leg -->
<path d="M683 396 L712 414 L692 468 L660 494 L658 506 Q652 516 642 522 Q634 508 630 490 L655 470 L674 450 L678 420Z"/>
<!-- dress -->
<path d="M728 304 Q700 336 669 378 Q688 408 712 420 Q735 429 766 427 L770 386 L780 330 Z"/>
<!-- torso right side / back -->
<path d="M752 302 L776 322 Q795 340 812 362 L800 388 L770 386 L750 340Z" />
<!-- right arm extended -->
<path d="M800 372 L811 368 Q830 366 840 362 Q850 352 862 342 Q860 356 861 362 Q866 372 863 377 Q856 382 840 380 Q822 386 808 390 Z"/>
<!-- hair silhouette -->
<path d="M797 187 C776 188 757 198 745 210 C728 226 718 248 712 268 L695 280 L707 288 C708 296 709 304 716 312 L731 303 C740 304 746 306 752 306 L770 314 C780 319 795 321 808 317 L808 325 C810 332 818 334 826 330 C835 320 838 306 846 296 C856 283 866 272 868 258 C870 240 868 225 862 213 C855 206 846 205 838 201 C826 192 812 187 797 187Z"/>
<!-- front arm -->
<path d="M727 305 L747 311 L747 352 Q770 358 791 368 Q788 380 795 400 Q784 400 769 383 Q748 372 731 365 Q722 358 724 343Z"/>
</g>
<g fill="none" stroke="#000" stroke-linecap="round" stroke-linejoin="round">
<path d="M751 285 C754 300 768 313 784 318 C795 321 806 320 815 314 C825 306 834 296 836 280 C834 268 830 262 829 250" stroke-width="4.5"/>
<path d="M746 214 C736 235 728 258 728 274 C730 285 742 289 757 283 C768 275 774 265 779 252 C782 245 784 238 787 233" stroke-width="3.5"/>
<path d="M775 263 C782 268 792 271 803 270 C815 268 825 260 831 249" stroke-width="3.5"/>
<path d="M786 239 C789 247 797 251 806 251 C813 251 818 247 821 240" stroke-width="3"/><path d="M787 238 Q803 242 821 240" stroke-width="2.2"/>
</g>
<g fill="#000">
<path d="M767 233 C758 248 748 260 740 268 C746 268 750 266 752 264 C758 252 763 243 767 233Z"/>
<ellipse cx="779" cy="272" rx="8" ry="5.5" transform="rotate(25 779 272)"/>
<ellipse cx="817" cy="285" rx="6" ry="11.5" transform="rotate(25 817 285)"/>
<path d="M772 296 Q774 290 778 292 Q783 298 781 300 Q786 302 784 306 Q780 310 777 306" fill="none" stroke="#000" stroke-width="2.4"/>
<path d="M796 297 L801 292" stroke="#000" stroke-width="2.4"/>
<path d="M808 300 L807 306 M813 302 L814 305" stroke="#000" stroke-width="2.2"/>
</g>
<!-- gizmos -->
<svg x="613" y="132" width="14" height="14"><use href="#lock"/></svg>
<svg x="573" y="228" width="14" height="14"><use href="#lock"/></svg>
<svg x="665" y="235" width="14" height="14"><use href="#lock"/></svg>
<svg x="701" y="215" width="14" height="14"><use href="#lock"/></svg>
<svg x="820" y="224" width="14" height="14" opacity="0.45"><use href="#lock"/></svg>
<svg x="680" y="338" width="14" height="14"><use href="#lock"/></svg>
<svg x="722" y="338" width="14" height="14"><use href="#lock"/></svg>
<svg x="731" y="374" width="14" height="14"><use href="#lock"/></svg>
<g fill="none" stroke="#8c8c8c" stroke-width="1.3"><circle cx="643" cy="361" r="2.5" fill="#8c8c8c"/><path d="M637 355 L640 358 M649 355 L646 358 M637 367 L640 364 M649 367 L646 364"/></g>
<g fill="none" stroke="#aaa" stroke-width="1.3"><circle cx="729" cy="373" r="3" fill="#bbb"/><path d="M722 373 H725 M733 373 H736 M729 366 V369 M729 377 V380"/></g>
<g fill="none" stroke="#bbb" stroke-width="1.3" opacity="0.8"><circle cx="806" cy="369" r="3" fill="#ccc"/><path d="M800 363 L803 366 M812 375 L809 372 M800 375 L803 372"/></g>
</svg>
<!-- ===== ANIMATION PANEL ===== -->
<div class="pn" style="left:265px;top:529px;width:1106px;height:313px;border-radius:5px"></div>
<!-- top row -->
<svg class="a" style="left:277px;top:545px" width="12" height="12" viewBox="0 0 12 12"><path d="M10 1 L2 6 L10 11Z" fill="#d0d0d0"/></svg>
<svg class="a" style="left:308px;top:545px" width="14" height="12" viewBox="0 0 14 12"><path d="M8 1 L1 6 L8 11Z" fill="#d0d0d0"/><rect x="10" y="1" width="2.5" height="10" fill="#d0d0d0"/></svg>
<svg class="a" style="left:341px;top:545px" width="12" height="12" viewBox="0 0 12 12"><rect x="1" y="1" width="10" height="10" fill="#d0d0d0"/></svg>
<svg class="a" style="left:371px;top:545px" width="14" height="12" viewBox="0 0 14 12"><rect x="1" y="1" width="2.5" height="10" fill="#d0d0d0"/><path d="M6 1 L13 6 L6 11Z" fill="#d0d0d0"/></svg>
<svg class="a" style="left:405px;top:545px" width="12" height="12" viewBox="0 0 12 12"><path d="M2 1 L10 6 L2 11Z" fill="#d0d0d0"/></svg>
<div class="in" style="left:429px;top:535px;width:71px;height:32px"></div>
<div class="t" style="left:437px;top:541px;color:#e0e0e0">0.14</div>
<svg class="a" style="left:503px;top:539px" width="12" height="24" viewBox="0 0 12 24"><path d="M2 6 L6 2 L10 6 M2 18 L6 22 L10 18" fill="none" stroke="#d0d0d0" stroke-width="1.6"/></svg>
<div class="sep" style="left:525px;top:539px;height:22px;background:#1a1a1a"></div>
<div class="bt" style="left:535px;top:535px;width:82px;height:32px;background:#383838"></div>
<div class="t" style="left:542px;top:541px;color:#d0d0d0">Animation</div>
<div class="bt" style="left:622px;top:535px;width:536px;height:32px;background:#383838"></div>
<div class="t" style="left:628px;top:541px;color:#d0d0d0">trip</div>
<svg class="a" style="left:1137px;top:545px" width="12" height="12"><use href="#chevw"/></svg>
<svg class="a" style="left:1168px;top:543px" width="16" height="16" viewBox="0 0 16 16"><path d="M1.5 2.5 H11 L15 8 L11 13.5 H1.5Z" fill="none" stroke="#d0d0d0" stroke-width="1.6"/><path d="M4 11 L6 5 L8 11 M4.8 9 H7.2" fill="none" stroke="#d0d0d0" stroke-width="1.3"/><path d="M9.5 6 L11.5 8 L9.5 10Z" fill="#d0d0d0"/></svg>
<div class="sep" style="left:1197px;top:539px;height:24px"></div>
<div class="bt" style="left:1206px;top:535px;width:41px;height:33px;background:#3a3a3a"></div>
<div class="t" style="left:1213px;top:541px;color:#d0d0d0">Edit</div>
<div class="sep" style="left:1254px;top:539px;height:24px"></div>
<svg class="a" style="left:1270px;top:544px" width="14" height="14" viewBox="0 0 14 14"><path d="M7 0.5 Q13.5 6 13 9 Q12 13.5 7 13.5 Q2 13.5 1 9 Q0.5 6 7 0.5Z" fill="#d0d0d0"/><path d="M7 3 Q4.5 7 5 10 Q6 12.5 7 12.5 Q8 12.5 9 10 Q9.5 7 7 3Z" fill="#282828"/><path d="M7 4 V12.5" stroke="#d0d0d0" stroke-width="1.6"/></svg>
<svg class="a" style="left:1302px;top:544px" width="14" height="14"><use href="#kebabw"/></svg>
<div class="sep" style="left:1330px;top:539px;height:24px"></div>
<svg class="a" style="left:1346px;top:543px" width="14" height="15" viewBox="0 0 14 15"><path d="M3 1 H11 V3 H9.5 V7 L12 9.5 V10.5 H2 V9.5 L4.5 7 V3 H3Z" fill="#d0d0d0"/><rect x="6.3" y="10.5" width="1.4" height="4" fill="#d0d0d0"/></svg>

<!-- second row -->
<svg class="a" style="left:280px;top:583px" width="14" height="14"><use href="#plus"/></svg>
<div class="in" style="left:307px;top:576px;width:120px;height:29px"></div>
<div class="t dim" style="left:315px;top:580px">Filter Tracks</div>
<svg class="a" style="left:403px;top:583px" width="14" height="14"><use href="#search"/></svg>
<svg class="a" style="left:431px;top:585px" width="16" height="10" viewBox="0 0 16 10"><path d="M1 5 H15 M4 2 L1 5 L4 8 M12 2 L15 5 L12 8" fill="none" stroke="#d8d8d8" stroke-width="1.6"/></svg>
<div class="a" style="left:454px;top:576px;width:742px;height:29px;background:#333;border-radius:5px"></div>
<div class="a" style="left:454px;top:576px;width:151px;height:29px;background:#3b3b3b;border-radius:5px 0 0 5px"></div>
<div class="a" style="left:456px;top:580px;width:2px;height:20px;background:#bdbdbd"></div>
<div class="t" style="left:459px;top:579px;color:#d0d0d0">0</div>
<div class="a" style="left:556px;top:582px;width:1px;height:18px;background:#555"></div>
<div class="t" style="left:559px;top:579px;color:#8e8e8e">1</div>
<div class="a" style="left:656px;top:582px;width:1px;height:18px;background:#555"></div>
<div class="t" style="left:659px;top:579px;color:#8e8e8e">2</div>
<div class="a" style="left:756px;top:582px;width:1px;height:18px;background:#555"></div>
<div class="t" style="left:759px;top:579px;color:#8e8e8e">3</div>
<div class="a" style="left:856px;top:582px;width:1px;height:18px;background:#555"></div>
<div class="t" style="left:859px;top:579px;color:#8e8e8e">4</div>
<div class="a" style="left:956px;top:582px;width:1px;height:18px;background:#555"></div>
<div class="t" style="left:959px;top:579px;color:#8e8e8e">5</div>
<div class="a" style="left:1056px;top:582px;width:1px;height:18px;background:#555"></div>
<div class="t" style="left:1059px;top:579px;color:#8e8e8e">6</div>
<div class="a" style="left:1156px;top:582px;width:1px;height:18px;background:#555"></div>
<div class="t" style="left:1159px;top:579px;color:#8e8e8e">7</div>
<div class="a" style="left:271px;top:609px;width:1080px;height:35px;background:#232323;border-radius:4px"></div>
<div class="a" style="left:469px;top:609px;width:135px;height:35px;background:#1f1f1f"></div>
<div class="a" style="left:604px;top:609px;width:579px;height:35px;background:#1b1b1b"></div>
<div class="a" style="left:271px;top:644px;width:198px;height:27px;background:#262626"></div>
<div class="a" style="left:469px;top:644px;width:135px;height:27px;background:#292929"></div>
<div class="a" style="left:604px;top:644px;width:579px;height:27px;background:#242424"></div>
<div class="a" style="left:271px;top:671px;width:1080px;height:35px;background:#232323;border-radius:4px"></div>
<div class="a" style="left:469px;top:671px;width:135px;height:35px;background:#1f1f1f"></div>
<div class="a" style="left:604px;top:671px;width:579px;height:35px;background:#1b1b1b"></div>
<div class="a" style="left:271px;top:706px;width:198px;height:27px;background:#262626"></div>
<div class="a" style="left:469px;top:706px;width:135px;height:27px;background:#292929"></div>
<div class="a" style="left:604px;top:706px;width:579px;height:27px;background:#242424"></div>
<div class="a" style="left:271px;top:733px;width:1080px;height:22px;background:#232323;border-radius:4px"></div>
<div class="a" style="left:469px;top:733px;width:135px;height:22px;background:#1f1f1f"></div>
<div class="a" style="left:604px;top:733px;width:579px;height:22px;background:#1b1b1b"></div>
<!-- track labels -->
<svg class="a" style="left:287px;top:618px" width="15" height="15" viewBox="0 0 15 15"><path d="M0.5 1 H14.5 L9 7.5 L14.5 14 H0.5Z" fill="#5e94f2"/></svg>
<div class="t" style="left:311px;top:615px;color:#dadada">L Foot face L</div>
<svg class="a" style="left:296px;top:651px" width="14" height="14"><use href="#chk"/></svg>
<svg class="a" style="left:317px;top:653px" width="9" height="9" viewBox="0 0 9 9"><path d="M4.5 0.5 L8.5 4.5 L4.5 8.5 L0.5 4.5Z" fill="#e0e0e0"/></svg>
<div class="t" style="left:333px;top:646px;color:#c4c4c4">visible</div>
<div class="a" style="left:448px;top:650px;width:14px;height:14px;background:#4a4a4a;border-radius:2px"></div>
<svg class="a" style="left:287px;top:680px" width="15" height="15" viewBox="0 0 15 15"><path d="M0.5 1 H14.5 L9 7.5 L14.5 14 H0.5Z" fill="#5e94f2"/></svg>
<div class="t" style="left:311px;top:677px;color:#dadada">L Foot face R</div>
<svg class="a" style="left:296px;top:712px" width="14" height="14"><use href="#chk"/></svg>
<svg class="a" style="left:317px;top:714px" width="9" height="9" viewBox="0 0 9 9"><path d="M4.5 0.5 L8.5 4.5 L4.5 8.5 L0.5 4.5Z" fill="#e0e0e0"/></svg>
<div class="t" style="left:333px;top:708px;color:#c4c4c4">visible</div>
<svg class="a" style="left:448px;top:712px" width="14" height="14"><use href="#chk"/></svg>
<div class="a" style="left:265px;top:733px;width:1106px;height:22px;overflow:hidden">
<svg class="a" style="left:22px;top:9px" width="14" height="14"><use href="#bone"/></svg>
<div class="t" style="left:46px;top:6px;color:#c8c8c8">Right Upper Arm</div>
</div>
<!-- playhead -->
<div class="a" style="left:468px;top:578px;width:2px;height:177px;background:#5b9ff3"></div>
<svg class="a" style="left:460px;top:576px" width="18" height="8" viewBox="0 0 18 8"><path d="M0 0 H18 L9 8Z" fill="#5b9ff3"/></svg>
<svg class="a" style="left:598px;top:576px" width="13" height="8" viewBox="0 0 13 8"><path d="M0 0 H13 L6.5 7Z" fill="#f0f0f0"/></svg>
<!-- right: length, loop -->
<svg class="a" style="left:1239px;top:582px" width="15" height="16" viewBox="0 0 15 16"><circle cx="7.5" cy="9" r="5.6" fill="none" stroke="#d8d8d8" stroke-width="1.8"/><path d="M5.5 1.2 H9.5 M7.5 1.2 V3.4 M7.5 9 L9.8 6.5" stroke="#d8d8d8" stroke-width="1.7"/></svg>
<div class="in" style="left:1259px;top:576px;width:70px;height:29px"></div>
<div class="t" style="left:1278px;top:580px;color:#e0e0e0">1.5</div>
<svg class="a" style="left:1341px;top:582px" width="15" height="15" viewBox="0 0 15 15"><path d="M2 7 Q2 3 6 3 H12 M10 1 L12.5 3 L10 5 M13 8 Q13 12 9 12 H3 M5 10 L2.5 12 L5 14" fill="none" stroke="#d8d8d8" stroke-width="1.8"/></svg>
<div class="a" style="left:1360px;top:610px;width:5px;height:30px;background:#555;border-radius:3px"></div>
<svg class="a" style="left:1188px;top:652px" width="16" height="12" viewBox="0 0 16 12"><g fill="#d9d94a"><circle cx="2" cy="10" r="1.2"/><circle cx="7" cy="7" r="1.2"/><circle cx="12" cy="4" r="1.2"/></g></svg>
<svg class="a" style="left:1210px;top:654px" width="10" height="10"><use href="#chev"/></svg>
<svg class="a" style="left:1228px;top:652px" width="16" height="10" viewBox="0 0 16 10"><path d="M2 8 L8 2.5 L14 8" fill="none" stroke="#f0c419" stroke-width="2.2"/></svg>
<svg class="a" style="left:1249px;top:654px" width="10" height="10"><use href="#chev"/></svg>
<svg class="a" style="left:1267px;top:652px" width="16" height="12" viewBox="0 0 16 12"><path d="M3 7 Q1.5 3 5 3 H13 M11 0.8 L13.5 3 L11 5.2 M13 5 Q14.5 9 11 9 H3 M5 6.8 L2.5 9 L5 11.2" fill="none" stroke="#c45df5" stroke-width="1.8"/></svg>
<svg class="a" style="left:1288px;top:654px" width="10" height="10"><use href="#chev"/></svg>
<svg class="a" style="left:1312px;top:651px" width="14" height="14" viewBox="0 0 14 14"><g fill="#e0e0e0"><rect x="1" y="2" width="12" height="1.8"/><rect x="5" y="0.3" width="4" height="1.8"/><path d="M2.5 4.5 H11.5 V13.5 H2.5Z"/></g><g fill="#282828"><rect x="4.3" y="6" width="1.3" height="6"/><rect x="6.35" y="6" width="1.3" height="6"/><rect x="8.4" y="6" width="1.3" height="6"/></g></svg>
<svg class="a" style="left:1188px;top:714px" width="16" height="12" viewBox="0 0 16 12"><g fill="#d9d94a"><circle cx="2" cy="10" r="1.2"/><circle cx="7" cy="7" r="1.2"/><circle cx="12" cy="4" r="1.2"/></g></svg>
<svg class="a" style="left:1210px;top:716px" width="10" height="10"><use href="#chev"/></svg>
<svg class="a" style="left:1228px;top:714px" width="16" height="10" viewBox="0 0 16 10"><path d="M2 8 L8 2.5 L14 8" fill="none" stroke="#f0c419" stroke-width="2.2"/></svg>
<svg class="a" style="left:1249px;top:716px" width="10" height="10"><use href="#chev"/></svg>
<svg class="a" style="left:1267px;top:714px" width="16" height="12" viewBox="0 0 16 12"><path d="M3 7 Q1.5 3 5 3 H13 M11 0.8 L13.5 3 L11 5.2 M13 5 Q14.5 9 11 9 H3 M5 6.8 L2.5 9 L5 11.2" fill="none" stroke="#c45df5" stroke-width="1.8"/></svg>
<svg class="a" style="left:1288px;top:716px" width="10" height="10"><use href="#chev"/></svg>
<svg class="a" style="left:1312px;top:713px" width="14" height="14" viewBox="0 0 14 14"><g fill="#e0e0e0"><rect x="1" y="2" width="12" height="1.8"/><rect x="5" y="0.3" width="4" height="1.8"/><path d="M2.5 4.5 H11.5 V13.5 H2.5Z"/></g><g fill="#282828"><rect x="4.3" y="6" width="1.3" height="6"/><rect x="6.35" y="6" width="1.3" height="6"/><rect x="8.4" y="6" width="1.3" height="6"/></g></svg>
<!-- ===== BOTTOM TOOLBAR ===== -->
<div class="bt" style="left:307px;top:769px;width:113px;height:33px;background:#3a3a3a"></div>
<svg class="a" style="left:314px;top:778px" width="16" height="14" viewBox="0 0 16 14"><path d="M2 12 Q4 4 8 3 Q12 2 14 4" fill="none" stroke="#3aa0e8" stroke-width="1.5"/><path d="M2 6 L12 2" stroke="#3aa0e8" stroke-width="1.5"/><g fill="#e0e0e0"><circle cx="2" cy="12" r="1.4"/><circle cx="14" cy="12" r="1.4"/><circle cx="2" cy="6" r="1.3"/><circle cx="13" cy="2" r="1.3"/><circle cx="7.5" cy="4" r="1.2"/></g></svg>
<div class="t" style="left:335px;top:775px;color:#d8d8d8">Balanced</div>
<svg class="a" style="left:401px;top:779px" width="12" height="12"><use href="#chevw"/></svg>
<div class="sep" style="left:428px;top:772px;height:26px"></div>
<svg class="a" style="left:445px;top:777px" width="16" height="16" viewBox="0 0 16 16"><path d="M2 14 Q7 14 8 8 Q9 2 14 2" fill="none" stroke="#2f7fa8" stroke-width="2"/><circle cx="2" cy="14" r="1.6" fill="#777"/><circle cx="14" cy="2" r="1.6" fill="#777"/></svg>
<div class="t" style="left:480px;top:775px;font-size:12.5px;color:#d8d8d8;font-weight:bold">.f()</div>
<svg class="a" style="left:518px;top:778px" width="14" height="14" viewBox="0 0 14 14"><path d="M0.5 1 H13.5 L8.5 7 V13 L5.5 11 V7Z" fill="#d8d8d8"/></svg>
<svg class="a" style="left:553px;top:777px" width="16" height="16" viewBox="0 0 16 16"><path d="M4 1.5 V14.5 M1.5 4 L4 1.5 L6.5 4 M1.5 12 L4 14.5 L6.5 12" fill="none" stroke="#d8d8d8" stroke-width="1.7"/><path d="M8.5 3 H15 M8.5 7.5 H13 M8.5 12 H11" stroke="#d8d8d8" stroke-width="1.7"/></svg>
<svg class="a" style="left:590px;top:778px" width="14" height="14" viewBox="0 0 14 14"><path d="M1 2 H3 M5 2 H13 M3 7 H5 M7 7 H13 M3 12 H5 M7 12 H13" stroke="#d8d8d8" stroke-width="1.8"/></svg>
<svg class="a" style="left:625px;top:777px" width="16" height="16" viewBox="0 0 16 16"><path d="M4 0.5 L7.5 4 L4 7.5 L0.5 4Z" fill="#e0e0e0"/><path d="M7 7 L14.5 10 L11.5 11 L13.5 13.5 L12.5 14.5 L10.5 12 L9 14.5Z" fill="#e0e0e0"/></svg>
<div class="sep" style="left:656px;top:772px;height:26px"></div>
<svg class="a" style="left:673px;top:777px" width="16" height="16" viewBox="0 0 16 16"><path d="M1 2 H8 M4.5 2 V14" stroke="#d8d8d8" stroke-width="1.8"/><path d="M7.5 15 V10 Q7.5 7 10.5 7 Q13.5 7 13.5 10 V15" fill="none" stroke="#d8d8d8" stroke-width="1.8"/></svg>
<svg class="a" style="left:709px;top:777px" width="16" height="16" viewBox="0 0 16 16"><path d="M4 0.5 L7.5 4 L4 7.5 L0.5 4Z" fill="#5ea6f6"/><path d="M7.5 15 V10 Q7.5 7 10.5 7 Q13.5 7 13.5 10 V15" fill="none" stroke="#5ea6f6" stroke-width="1.8"/></svg>
<div class="t" style="left:743px;top:776px;font-size:10.5px;font-weight:bold;color:#5ea6f6;letter-spacing:0.2px">FPS</div>
<div class="t" style="left:781px;top:775px;color:#d8d8d8">Nearest FPS: 30</div>
<div class="in" style="left:901px;top:769px;width:99px;height:33px"></div>
<div class="t" style="left:921px;top:774px;color:#e0e0e0">0.0333</div>
<div class="bt" style="left:1005px;top:769px;width:89px;height:33px;background:#3a3a3a"></div>
<div class="t" style="left:1013px;top:775px;color:#d8d8d8">Seconds</div>
<svg class="a" style="left:1074px;top:779px" width="12" height="12"><use href="#chevw"/></svg>
<div class="sep" style="left:1102px;top:772px;height:26px"></div>
<svg class="a" style="left:1112px;top:777px" width="16" height="16" viewBox="0 0 16 16"><circle cx="6" cy="8" r="4.5" fill="none" stroke="#d8d8d8" stroke-width="1.8"/><path d="M9.2 11.2 L13 15" stroke="#d8d8d8" stroke-width="2"/><path d="M11 1 V7 M8 4 H14" stroke="#d8d8d8" stroke-width="1.6"/></svg>
<div class="a" style="left:1131px;top:783px;width:200px;height:4px;background:#1c1c1c;border-radius:2px"></div>
<div class="a" style="left:1131px;top:783px;width:100px;height:4px;background:#8a8a8a;border-radius:2px"></div>
<div class="a" style="left:1223px;top:777px;width:16px;height:16px;border-radius:50%;background:#2a2a2a;border:2px solid #6a6a6a"></div>
<div class="a" style="left:1227px;top:781px;width:8px;height:8px;border-radius:50%;background:#f0f0f0"></div>
<svg class="a" style="left:1342px;top:777px" width="18" height="16" viewBox="0 0 18 16"><path d="M1.5 1 V15 M16.5 1 V15 M4 8 H14 M6.5 5.5 L4 8 L6.5 10.5 M11.5 5.5 L14 8 L11.5 10.5" fill="none" stroke="#d8d8d8" stroke-width="1.8"/></svg>

<!-- ===== BOTTOM TABS ===== -->
<div class="t" style="left:277px;top:812px;color:#c8c8c8">Output</div>
<div class="a" style="left:342px;top:818px;width:8px;height:8px;border-radius:50%;background:#b09c62"></div>
<div class="t" style="left:354px;top:812px;color:#c9b47c">Debugger (5)</div>
<div class="t" style="left:464px;top:812px;color:#c8c8c8">Audio</div>
<div class="bt" style="left:515px;top:806px;width:83px;height:32px;background:#3c3c3c"></div>
<div class="t" style="left:523px;top:812px;color:#e6e6e6">Animation</div>
<div class="t" style="left:610px;top:812px;color:#c8c8c8">Shader Editor</div>
<div class="t" style="left:720px;top:812px;color:#c8c8c8">Phantom Camera</div>
<svg class="a" style="left:1149px;top:815px" width="14" height="14"><use href="#kebab"/></svg>
<div class="sep" style="left:1171px;top:810px;height:24px"></div>
<svg class="a" style="left:1186px;top:815px" width="14" height="14" viewBox="0 0 14 14"><path d="M2 11 Q4 9 4 6 Q4 2 7.5 2 Q11 2 11 6 Q11 9 12.5 11Z" fill="#555" transform="rotate(20 7 7)"/><circle cx="5" cy="12.5" r="1.5" fill="#555"/></svg>
<div class="t" style="left:1212px;top:812px;color:#9c9c9c">4.6.1.stable</div>
<svg class="a" style="left:1308px;top:814px" width="14" height="15" viewBox="0 0 14 15"><path d="M3 1 H11 V3 H9.5 V7 L12 9.5 V10.5 H2 V9.5 L4.5 7 V3 H3Z" fill="#d0d0d0"/><rect x="6.3" y="10.5" width="1.4" height="4" fill="#d0d0d0"/></svg>
<svg class="a" style="left:1343px;top:815px" width="15" height="14" viewBox="0 0 15 14"><path d="M0.5 1 H14.5" stroke="#d8d8d8" stroke-width="1.8"/><path d="M4 13 V5 M1.5 7.5 L4 5 L6.5 7.5 M11 13 V5 M8.5 7.5 L11 5 L13.5 7.5" fill="none" stroke="#d8d8d8" stroke-width="1.8"/></svg>
<!-- ===== INSPECTOR ===== -->
<div class="pn" style="left:1374px;top:43px;width:97px;height:40px;border-radius:5px 5px 0 0"></div>
<div class="pn" style="left:1374px;top:75px;width:220px;height:767px;border-radius:0 0 5px 5px"></div>
<div class="a" style="left:1597px;top:0px;width:1px;height:843px;background:#000"></div>
<div class="a" style="left:1598px;top:0px;width:2px;height:843px;background:#f4f4f4"></div>
<div class="t" style="left:1389px;top:49px;color:#d8d8d8">Inspector</div>
<svg class="a" style="left:1546px;top:52px" width="14" height="14" viewBox="0 0 14 14"><circle cx="7" cy="7" r="6.5" fill="#6a6a6a"/><path d="M8.5 3.5 L5 7 L8.5 10.5" fill="none" stroke="#141414" stroke-width="2"/></svg>
<svg class="a" style="left:1562px;top:52px" width="14" height="14" viewBox="0 0 14 14"><circle cx="7" cy="7" r="6.5" fill="#d0d0d0"/><path d="M5.5 3.5 L9 7 L5.5 10.5" fill="none" stroke="#141414" stroke-width="2"/></svg>
<svg class="a" style="left:1582px;top:52px" width="14" height="14" viewBox="0 0 14 14"><g fill="#7a7a7a"><circle cx="7" cy="2" r="1.6"/><circle cx="7" cy="7" r="1.6"/><circle cx="7" cy="12" r="1.6"/></g></svg>
<svg class="a" style="left:1387px;top:86px" width="14" height="14" viewBox="0 0 14 14"><path d="M1 0.5 H8 L12 4.5 V8 H9 V13.5 H1Z" fill="#d8d8d8"/><path d="M8 0.5 V4.5 H12" fill="none" stroke="#282828" stroke-width="1"/><path d="M10.5 8.5 V14 M7.8 11.3 H13.3" stroke="#4fd35a" stroke-width="2"/></svg>
<svg class="a" style="left:1418px;top:86px" width="15" height="14" viewBox="0 0 15 14"><path d="M0.5 2 H5 L6.5 3.5 H12 V6 H4 L2 12.5 H0.5Z" fill="#d8d8d8"/><path d="M4.5 6.5 H14.5 L12.5 12.5 H2.5Z" fill="#d8d8d8"/></svg>
<svg class="a" style="left:1451px;top:86px" width="14" height="14" viewBox="0 0 14 14"><path d="M0.5 0.5 H11 L13.5 3 V13.5 H0.5Z" fill="#6a6a6a"/><rect x="3" y="1" width="7" height="4" fill="#282828"/><circle cx="7" cy="9" r="1.8" fill="#282828"/></svg>
<svg class="a" style="left:1483px;top:86px" width="14" height="14"><use href="#kebabw"/></svg>
<svg class="a" style="left:1516px;top:86px" width="12" height="14" viewBox="0 0 12 14"><path d="M8 1.5 L3.5 7 L8 12.5" fill="none" stroke="#d8d8d8" stroke-width="1.8"/></svg>
<svg class="a" style="left:1540px;top:86px" width="12" height="14" viewBox="0 0 12 14"><path d="M4 1.5 L8.5 7 L4 12.5" fill="none" stroke="#6e6e6e" stroke-width="1.8"/></svg>
<svg class="a" style="left:1566px;top:86px" width="15" height="14" viewBox="0 0 15 14"><path d="M3.2 4 A5.6 5.6 0 1 1 3 9" fill="none" stroke="#d8d8d8" stroke-width="1.9"/><path d="M0.5 3.5 L4.5 6.5 L5 2Z" fill="#d8d8d8"/><path d="M8.5 4 V7.5 H11" fill="none" stroke="#d8d8d8" stroke-width="1.7"/></svg>

<div class="bt" style="left:1380px;top:109px;width:176px;height:33px;background:#3c3c3c"></div>
<svg class="a" style="left:1389px;top:118px" width="14" height="14"><use href="#film"/></svg>
<div class="t" style="left:1416px;top:115px;color:#e0e0e0">AnimationPla...</div>
<svg class="a" style="left:1534px;top:119px" width="12" height="12"><use href="#chevw"/></svg>
<svg class="a" style="left:1566px;top:116px" width="16" height="16" viewBox="0 0 16 16"><circle cx="9" cy="4.5" r="3.3" fill="none" stroke="#d8d8d8" stroke-width="1.7"/><path d="M6.5 7 L4.5 9" stroke="#d8d8d8" stroke-width="1.7"/><text x="8" y="15.5" text-anchor="middle" font-family="Liberation Sans" font-weight="bold" font-size="6.5" fill="#d8d8d8">DOC</text></svg>
<div class="in" style="left:1380px;top:146px;width:176px;height:29px"></div>
<div class="t dim" style="left:1388px;top:150px">Filter Properties</div>
<svg class="a" style="left:1532px;top:153px" width="14" height="14"><use href="#search"/></svg>
<svg class="a" style="left:1566px;top:152px" width="14" height="16" viewBox="0 0 14 16"><path d="M3.5 1 V15" stroke="#d8d8d8" stroke-width="2.2" stroke-linecap="round"/><path d="M1.5 3 H5.5 M1.5 10 H5.5" stroke="#d8d8d8" stroke-width="1.5"/><path d="M9 1 V4 Q9 6 10.5 6 Q12 6 12 4 V1 M10.5 6 V15" fill="none" stroke="#d8d8d8" stroke-width="1.8"/></svg>

<!-- section AnimationPlayer -->
<div class="a" style="left:1380px;top:185px;width:208px;height:31px;background:#333;border-radius:4px"></div>
<svg class="a" style="left:1417px;top:194px" width="14" height="14"><use href="#film"/></svg>
<div class="t b" style="left:1438px;top:191px;color:#e0e0e0">AnimationPlayer</div>

<div class="t" style="left:1388px;top:223px;color:#cdcdcd">Current Anim</div>
<div class="in" style="left:1484px;top:220px;width:72px;height:28px"></div>
<svg class="a" style="left:1535px;top:228px" width="12" height="12"><use href="#chevw"/></svg>
<svg class="a" style="left:1566px;top:229px" width="16" height="10"><use href="#key"/></svg>

<svg class="a" style="left:1383px;top:256px" width="10" height="10"><use href="#chevr"/></svg>
<div class="t b" style="left:1398px;top:251px;color:#d8d8d8">Playback Options</div>

<div class="t" style="left:1388px;top:278px;color:#cdcdcd">Speed Scale</div>
<div class="in" style="left:1484px;top:276px;width:72px;height:29px"></div>
<div class="t" style="left:1504px;top:278px;color:#e0e0e0">1.0</div>
<div class="a" style="left:1492px;top:298px;width:52px;height:1px;background:#8a8a8a"></div>
<div class="a" style="left:1492px;top:298px;width:34px;height:2px;background:#d0d0d0"></div>
<div class="a" style="left:1523px;top:296px;width:4px;height:5px;background:#f0f0f0"></div>
<svg class="a" style="left:1566px;top:286px" width="16" height="10"><use href="#key"/></svg>

<div class="t" style="left:1388px;top:310px;color:#cdcdcd">Movie Quit on</div>
<div class="in" style="left:1484px;top:307px;width:72px;height:29px"></div>
<div class="a" style="left:1491px;top:314px;width:14px;height:14px;background:#3e3e3e;border-radius:2px"></div>
<div class="t" style="left:1514px;top:311px;color:#d8d8d8">On</div>
<svg class="a" style="left:1566px;top:317px" width="16" height="10"><use href="#key"/></svg>

<!-- section AnimationMixer -->
<div class="a" style="left:1380px;top:340px;width:208px;height:31px;background:#333;border-radius:4px"></div>
<svg class="a" style="left:1419px;top:349px" width="14" height="14"><use href="#filmg"/></svg>
<div class="t b" style="left:1440px;top:346px;color:#e0e0e0">AnimationMixer</div>

<div class="t" style="left:1388px;top:378px;color:#cdcdcd">Active</div>
<div class="in" style="left:1484px;top:375px;width:72px;height:29px"></div>
<svg class="a" style="left:1491px;top:382px" width="14" height="14"><use href="#chk"/></svg>
<div class="t" style="left:1514px;top:379px;color:#d8d8d8">On</div>
<svg class="a" style="left:1566px;top:385px" width="16" height="10"><use href="#key"/></svg>

<div class="t" style="left:1388px;top:409px;color:#cdcdcd">Determini</div>
<svg class="a" style="left:1460px;top:413px" width="14" height="14" viewBox="0 0 14 14"><path d="M3 5 A5 5 0 1 1 4 11.5" fill="none" stroke="#d8d8d8" stroke-width="1.7"/><path d="M0.5 4.5 L4.5 2.5 L4.5 7Z" fill="#d8d8d8"/></svg>
<div class="in" style="left:1484px;top:406px;width:72px;height:29px"></div>
<svg class="a" style="left:1491px;top:413px" width="14" height="14"><use href="#chk"/></svg>
<div class="t" style="left:1514px;top:410px;color:#d8d8d8">On</div>
<svg class="a" style="left:1566px;top:416px" width="16" height="10"><use href="#key"/></svg>

<div class="t" style="left:1388px;top:440px;color:#cdcdcd">Reset on Sav</div>
<div class="in" style="left:1484px;top:437px;width:72px;height:29px"></div>
<svg class="a" style="left:1491px;top:444px" width="14" height="14"><use href="#chk"/></svg>
<div class="t" style="left:1514px;top:441px;color:#d8d8d8">On</div>
<svg class="a" style="left:1566px;top:447px" width="16" height="10"><use href="#key"/></svg>

<div class="t" style="left:1388px;top:471px;color:#cdcdcd">Root Node</div>
<div class="in" style="left:1484px;top:468px;width:72px;height:29px"></div>
<svg class="a" style="left:1494px;top:476px" width="13" height="13"><use href="#ring"/></svg>
<svg class="a" style="left:1533px;top:475px" width="14" height="14"><use href="#kebabw"/></svg>
<svg class="a" style="left:1566px;top:478px" width="16" height="10"><use href="#key"/></svg>

<svg class="a" style="left:1383px;top:504px" width="10" height="10"><use href="#chevr"/></svg>
<div class="t b" style="left:1398px;top:499px;color:#d8d8d8">Root Motion</div>
<svg class="a" style="left:1383px;top:529px" width="10" height="10"><use href="#chevr"/></svg>
<div class="t b" style="left:1398px;top:524px;color:#d8d8d8">Audio</div>
<svg class="a" style="left:1383px;top:554px" width="10" height="10"><use href="#chevr"/></svg>
<div class="t b" style="left:1398px;top:549px;color:#d8d8d8">Callback Mode</div>

<div class="a" style="left:1380px;top:577px;width:208px;height:30px;background:#333;border-radius:4px"></div>
<svg class="a" style="left:1456px;top:586px" width="13" height="13" viewBox="0 0 14 14"><circle cx="7" cy="7" r="5.2" fill="none" stroke="#e0e0e0" stroke-width="2"/></svg>
<div class="t b" style="left:1476px;top:582px;color:#e0e0e0">Node</div>

<svg class="a" style="left:1383px;top:616px" width="10" height="10"><use href="#chevr"/></svg>
<div class="t b" style="left:1398px;top:611px;color:#d8d8d8">Process</div>
<svg class="a" style="left:1383px;top:641px" width="10" height="10"><use href="#chevr"/></svg>
<div class="t b" style="left:1398px;top:636px;color:#d8d8d8">Physics Interpolation</div>
<svg class="a" style="left:1383px;top:666px" width="10" height="10"><use href="#chevr"/></svg>
<div class="t b" style="left:1398px;top:661px;color:#d8d8d8">Auto Translate</div>
<svg class="a" style="left:1383px;top:691px" width="10" height="10"><use href="#chevr"/></svg>
<div class="t b" style="left:1398px;top:686px;color:#d8d8d8">Editor Description</div>

<div class="t" style="left:1388px;top:716px;color:#cdcdcd">Script</div>
<div class="in" style="left:1484px;top:713px;width:72px;height:29px"></div>
<svg class="a" style="left:1509px;top:720px" width="15" height="14" viewBox="0 0 15 14"><path d="M0.5 2 H5 L6.5 3.5 H12 V6 H4 L2 12.5 H0.5Z" fill="#d8d8d8"/><path d="M4.5 6.5 H14.5 L12.5 12.5 H2.5Z" fill="#d8d8d8"/><path d="M9 7 L7 10 H9 L8 13 L11 9 H9 L10 7Z" fill="#d4a82a"/></svg>
<svg class="a" style="left:1537px;top:722px" width="12" height="12"><use href="#chevw"/></svg>
<svg class="a" style="left:1566px;top:723px" width="16" height="10"><use href="#key"/></svg>

<div class="bt" style="left:1417px;top:754px;width:133px;height:33px;background:#3a3a3a"></div>
<svg class="a" style="left:1426px;top:763px" width="14" height="14"><use href="#plus"/></svg>
<div class="t" style="left:1449px;top:760px;color:#d8d8d8">Add Metadata</div>

</body></html>
